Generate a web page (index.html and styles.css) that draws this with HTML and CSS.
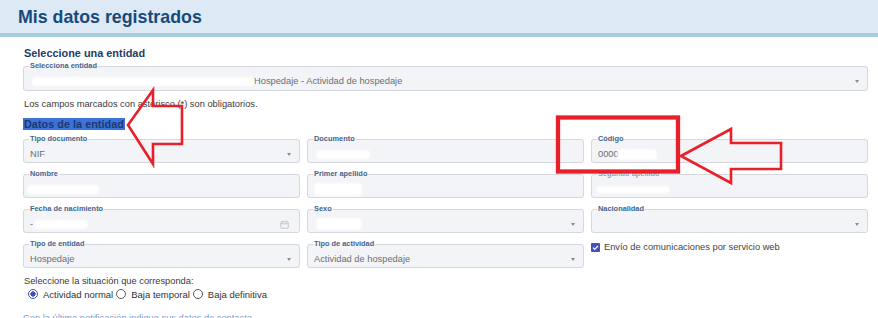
FILE: index.html
```html
<!DOCTYPE html>
<html lang="es">
<head>
<meta charset="utf-8">
<title>Mis datos registrados</title>
<link rel="stylesheet" href="styles.css">
</head>
<body>
<header class="page-header"><h1 class="page-title">Mis datos registrados</h1></header>
<main class="content">
  <h2 class="section-title">Seleccione una entidad</h2>
  <fieldset class="field field-wide">
    <legend>Selecciona entidad</legend>
    <div class="field-value"><span class="redact r-entity"></span><span>Hospedaje - Actividad de hospedaje</span><span class="caret"></span></div>
  </fieldset>
  <p class="note">Los campos marcados con asterisco (*) son obligatorios.</p>
  <h3 class="section-title sub"><span class="selected">Datos de la entidad</span></h3>
  <div class="grid">
    <fieldset class="field"><legend>Tipo documento</legend>
      <div class="field-value"><span>NIF</span><span class="caret"></span></div></fieldset>
    <fieldset class="field"><legend>Documento</legend>
      <div class="field-value"><span class="redact r-doc"></span></div></fieldset>
    <fieldset class="field"><legend>Código</legend>
      <div class="field-value"><span>0000</span><span class="redact r-code"></span></div></fieldset>

    <fieldset class="field"><legend>Nombre</legend>
      <div class="field-value"><span class="redact r-name"></span></div></fieldset>
    <fieldset class="field"><legend>Primer apellido</legend>
      <div class="field-value"><span class="redact r-last1"></span></div></fieldset>
    <fieldset class="field"><legend class="faint">Segundo apellido</legend>
      <div class="field-value"><span class="redact r-last2"></span></div></fieldset>

    <fieldset class="field"><legend>Fecha de nacimiento</legend>
      <div class="field-value"><span>-</span><span class="redact r-date"></span>
        <svg class="cal" width="9" height="9" viewBox="0 0 9 9"><rect x="0.75" y="1.75" width="7.5" height="6.5" rx="1" fill="none" stroke="#c4c7cc" stroke-width="1"/><path d="M0.75 3.8h7.5M2.6 0.6v2M6.4 0.6v2" stroke="#c4c7cc" stroke-width="1"/></svg>
      </div></fieldset>
    <fieldset class="field"><legend>Sexo</legend>
      <div class="field-value"><span class="redact r-sex"></span><span class="caret"></span></div></fieldset>
    <fieldset class="field"><legend>Nacionalidad</legend>
      <div class="field-value"><span class="caret"></span></div></fieldset>

    <fieldset class="field"><legend>Tipo de entidad</legend>
      <div class="field-value"><span>Hospedaje</span><span class="caret"></span></div></fieldset>
    <fieldset class="field"><legend>Tipo de actividad</legend>
      <div class="field-value"><span>Actividad de hospedaje</span><span class="caret"></span></div></fieldset>
    <div class="check">
      <span class="checkbox"><svg width="9" height="9" viewBox="0 0 9 9"><path d="M2 4.6l1.7 1.7L7 3" fill="none" stroke="#fff" stroke-width="1.2"/></svg></span>
      <span>Envío de comunicaciones por servicio web</span>
    </div>
  </div>
  <p class="note situ">Seleccione la situación que corresponda:</p>
  <div class="radios">
    <span class="radio-opt"><span class="radio checked"></span>Actividad normal</span>
    <span class="radio-opt"><span class="radio"></span>Baja temporal</span>
    <span class="radio-opt"><span class="radio"></span>Baja definitiva</span>
  </div>
  <p class="footnote">Con la última notificación indique sus datos de contacto</p>
</main>
<svg class="annotations" width="878" height="318" viewBox="0 0 878 318">
  <polygon points="128,125 153,90 153,106 182,106 182,144 153,144 153,164" fill="none" stroke="#e8202a" stroke-width="2.6" stroke-linejoin="miter"/>
  <rect x="558" y="117.5" width="120" height="54" fill="none" stroke="#e8202a" stroke-width="4.3"/>
  <polygon points="681,156 731,129 731,143 781,143 781,169 731,169 731,183" fill="none" stroke="#e8202a" stroke-width="2.6"/>
</svg>
</body>
</html>
```

FILE: styles.css
```css
* { box-sizing: border-box; }
html, body { margin: 0; padding: 0; }
body {
  width: 878px;
  height: 318px;
  overflow: hidden;
  position: relative;
  background: #fff;
  font-family: "Liberation Sans", Arial, sans-serif;
  color: #3a3a3a;
}
.page-header {
  height: 37px;
  background: #dde9f5;
  border-bottom: 4px solid #a8cbe0;
  padding: 1px 0 0 18px;
}
.page-title {
  margin: 0;
  font-size: 17.8px;
  line-height: 32px;
  font-weight: bold;
  color: #174a7b;
}
.content {
  padding: 10px 10px 0 23px;
}
.section-title {
  margin: 0 0 2px 1px;
  font-size: 10.9px;
  line-height: 13px;
  font-weight: bold;
  color: #1d3d66;
}
.section-title.sub { margin: 8px 0 4px 0; }
.selected {
  background: #3d72da;
  color: #1b3a6e;
  padding: 0 1px;
}
.field {
  margin: 0;
  min-width: 0;
  padding: 5px 8px 2px 6px;
  border: 1px solid #d5d8de;
  border-radius: 3px;
  background: #f3f4f7;
}
.field-wide { padding-bottom: 3px; }
.field legend {
  margin-left: -1px;
  padding: 0 1px;
  font-size: 7.4px;
  line-height: 8px;
  font-weight: bold;
  color: #43648c;
}
.field legend.faint { color: #8ea2bb; }
.field-value {
  display: flex;
  align-items: center;
  height: 12px;
  font-size: 9.3px;
  line-height: 12px;
  color: #6e6e6e;
  white-space: nowrap;
}
.caret {
  margin-left: auto;
  width: 0;
  height: 0;
  border-left: 2.5px solid transparent;
  border-right: 2.5px solid transparent;
  border-top: 3px solid #8c8c8c;
}
.cal { margin-left: auto; margin-right: 2px; }
.redact {
  display: inline-block;
  height: 9px;
  background: #fff;
  border-radius: 4px;
  filter: blur(1.2px);
}
.r-entity { width: 222px; margin-left: 2px; }
.r-doc { width: 54px; margin-left: 2px; }
.r-code { width: 40px; margin-left: -2px; height: 11px; }
.r-name { width: 72px; margin-left: -3px; }
.r-last1 { width: 48px; margin-left: 0; height: 13px; }
.r-last2 { width: 74px; margin-left: -2px; height: 7px; }
.r-date { width: 54px; margin-left: 1px; }
.r-sex { width: 46px; margin-left: 2px; height: 12px; }
.note {
  margin: 7px 0 0 1px;
  font-size: 9.3px;
  line-height: 12px;
  color: #3a3a3a;
}
.grid {
  display: grid;
  grid-template-columns: repeat(3, 1fr);
  column-gap: 7px;
  row-gap: 7px;
}
.check {
  display: flex;
  align-items: center;
  gap: 4px;
  align-self: start;
  margin-top: 1px;
  height: 12px;
  font-size: 9.3px;
  color: #444;
}
.checkbox {
  display: flex;
  width: 9px;
  height: 9px;
  background: #4452b8;
  border-radius: 1px;
}
.situ { margin-top: 7px; }
.radios {
  display: flex;
  align-items: center;
  height: 12px;
  margin-top: 1px;
  padding-left: 5px;
  font-size: 9.5px;
  color: #333;
}
.radio-opt {
  display: flex;
  align-items: center;
  gap: 5px;
  margin-right: 3px;
}
.radio {
  width: 10px;
  height: 10px;
  border: 1px solid #5a5a5a;
  border-radius: 50%;
  background: #fff;
}
.radio.checked {
  border-color: #3f51b5;
  background: radial-gradient(circle, #3f51b5 0 2.4px, #fff 2.9px);
}
.footnote {
  margin: 12px 0 0 0;
  font-size: 9.3px;
  line-height: 12px;
  color: #7f9ecb;
}
.annotations {
  position: absolute;
  left: 0;
  top: 0;
  pointer-events: none;
}
```
